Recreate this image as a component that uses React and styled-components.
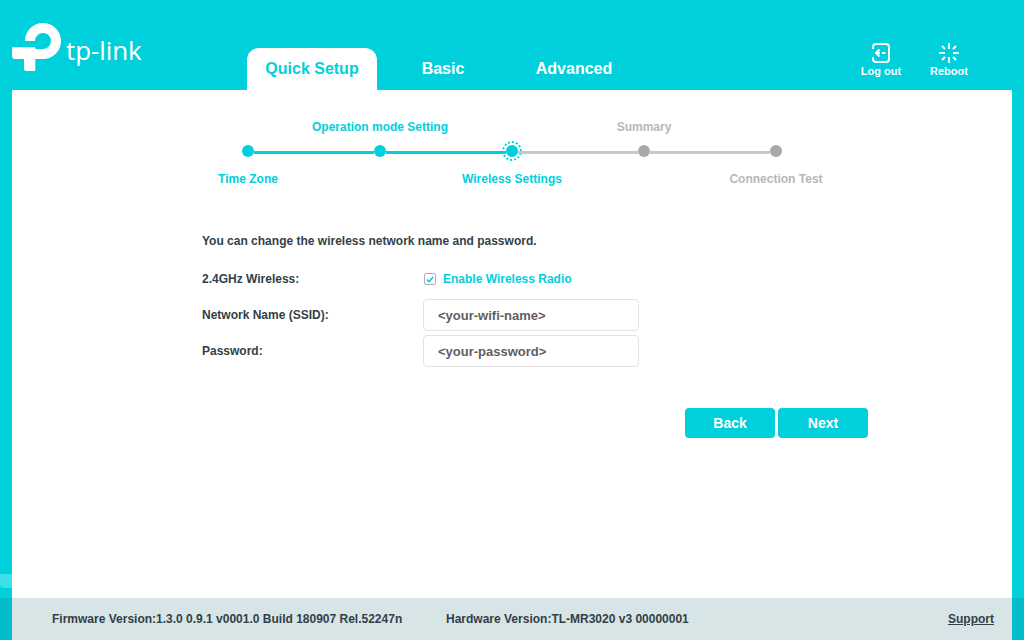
import React from "react";
import styled, { createGlobalStyle } from "styled-components";

const TEAL = "#00d0dc";

const GlobalStyle = createGlobalStyle`
   html, body {
      margin: 0;
      padding: 0;
      height: 100%;
      overflow: hidden;
   }
   body {
      font-family: "Liberation Sans", Arial, sans-serif;
      background: ${TEAL};
   }
   #root {
      height: 100%;
   }
`;

// page frame
const Page = styled.div`
   position: relative;
   display: flex;
   flex-direction: column;
   width: 1024px;
   height: 640px;
   background: ${TEAL};
`;

const Header = styled.header`
   display: flex;
   align-items: flex-end;
   height: 90px;
   padding-left: 12px;
   flex: none;
`;

const Logo = styled.div`
   display: flex;
   align-items: flex-start;
   align-self: flex-start;
   width: 235px;
   height: 48px;
   margin-top: 23px;
   color: #fff;
`;

const LogoText = styled.span`
   margin: 11px 0 0 4px;
   font-family: "Open Sans", sans-serif;
   font-size: 26px;
   font-weight: 400;
   line-height: 32px;
   letter-spacing: -0.1px;
`;

const Tabs = styled.nav`
   display: flex;
   gap: 1px;
`;

const Tab = styled.a`
   width: 130px;
   height: 42px;
   font-size: 16px;
   font-weight: 700;
   line-height: 41px;
   text-align: center;
   color: ${({ $active }) => ($active ? TEAL : "#fff")};
   background: ${({ $active }) => ($active ? "#fff" : "transparent")};
   border-radius: 12px 12px 0 0;
`;

const Tools = styled.div`
   display: flex;
   gap: 28px;
   margin-left: auto;
   margin-right: 55px;
   align-self: flex-start;
   margin-top: 43px;
`;

const Tool = styled.a`
   display: flex;
   flex-direction: column;
   align-items: center;
   width: 40px;
   gap: 2px;
   font-size: 11px;
   font-weight: 700;
   line-height: 13px;
   color: #fff;
   white-space: nowrap;
`;

const Main = styled.main`
   display: flex;
   flex-direction: column;
   flex: 1;
   margin: 0 12px;
   background: #fff;
`;

// stepper
const Stepper = styled.ol`
   display: grid;
   grid-template-columns: repeat(5, 132px);
   justify-content: start;
   margin: 0 0 0 170px;
   padding: 27px 0 0;
   list-style: none;
`;

const Step = styled.li`
   display: grid;
   grid-template-columns: 100%;
   grid-template-rows: 20px 28px 28px;
   justify-items: center;
   align-items: center;
   font-size: 12px;
   font-weight: 700;
   white-space: nowrap;
   color: ${({ $done }) => ($done ? TEAL : "#b8b8b8")};
`;

const StepLabel = styled.span`
   grid-row: ${({ $above }) => ($above ? 1 : 3)};
   line-height: 20px;
`;

const Node = styled.span`
   grid-row: 2;
   position: relative;
   width: 12px;
   height: 12px;
   border-radius: 50%;
   background: ${({ $done }) => ($done ? TEAL : "#a9a9ad")};

   &::after {
      content: ${({ $last }) => ($last ? "none" : '""')};
      position: absolute;
      left: 12px;
      top: 6px;
      width: 120px;
      height: 3px;
      background: ${({ $lineDone }) => ($lineDone ? TEAL : "#c8c8c8")};
   }

   &::before {
      content: ${({ $current }) => ($current ? '""' : "none")};
      position: absolute;
      inset: -4px;
      border: 2px dotted ${TEAL};
      border-radius: 50%;
   }
`;

// form
const Form = styled.form`
   display: flex;
   flex-direction: column;
   width: 666px;
   margin: 40px 0 0 190px;
`;

const Intro = styled.p`
   margin: 0 0 13px;
   font-size: 12px;
   font-weight: 700;
   line-height: 16px;
   color: #333f48;
`;

const Row = styled.div`
   display: grid;
   grid-template-columns: 221px 216px;
   align-items: center;
   height: 36px;
`;

const CheckRow = styled(Row)`
   height: 34px;
   margin-bottom: 1px;
`;

const Label = styled.label`
   font-size: 12px;
   font-weight: 700;
   color: #333f48;
`;

const CheckLabel = styled.label`
   display: flex;
   align-items: center;
   gap: 7px;
   margin-left: 1px;
   font-size: 12px;
   font-weight: 700;
   color: ${TEAL};
`;

const CheckBox = styled.span`
   display: flex;
   align-items: center;
   justify-content: center;
   box-sizing: border-box;
   width: 12px;
   height: 12px;
   border: 1px solid #aeaeae;
   border-radius: 2px;
   background: #fff;
`;

const Input = styled.input`
   box-sizing: border-box;
   width: 216px;
   height: 32px;
   padding: 0 14px;
   border: 1px solid #e3e3e3;
   border-radius: 4px;
   font: 700 13px "Liberation Sans", Arial, sans-serif;
   color: #5f5f5f;
   background: #fff;
   outline: none;
`;

const Actions = styled.div`
   display: flex;
   justify-content: flex-end;
   gap: 3px;
   margin-top: 39px;
`;

const Button = styled.button`
   width: 90px;
   height: 30px;
   padding: 0;
   border: 0;
   border-radius: 4px;
   font: 700 14px "Liberation Sans", Arial, sans-serif;
   color: #fff;
   background: ${TEAL};
`;

// footer
const Footer = styled.footer`
   display: flex;
   align-items: center;
   flex: none;
   height: 42px;
   margin-top: auto;
   padding: 0 18px 0 40px;
   font-size: 12px;
   font-weight: 700;
   color: #333f48;
   background: #d7e5e6;
`;

const Firmware = styled.span`
   width: 394px;
`;

const Support = styled.a`
   margin-left: auto;
   color: #333f48;
   text-decoration: underline;
`;

// the darker edges next to the footer
const Edge = styled.div`
   position: absolute;
   bottom: 0;
   width: 12px;
   height: 42px;
   background: #00bccb;
   ${({ $side }) => $side}: 0;
`;

const Glow = styled.div`
   position: absolute;
   left: 0;
   bottom: 52px;
   width: 12px;
   height: 14px;
   background: #3fdfe8;
   border-radius: 0 0 0 4px;
`;

const TpLogo = () => (
   <svg width="50" height="48" viewBox="12 23 50 48" fill="#fff" aria-hidden="true">
      <path d="M25 41A18 18 0 1 1 43 59H35.3V71H26.5Q24 71 24 68.5V59H15Q12 59 12 56V47.3H35.3V49H43A8 8 0 1 0 35 41Z" />
   </svg>
);

const LogoutIcon = () => (
   <svg width="18" height="20" viewBox="0 0 18 20" fill="none" stroke="#fff" strokeWidth="2" aria-hidden="true">
      <path d="M1 6V4Q1 1 4 1H14Q17 1 17 4V16Q17 19 14 19H4Q1 19 1 16V14" />
      <path d="M7.5 6.5L4 10L7.5 13.5M4 10H8M10 10H13.5" />
   </svg>
);

const RebootIcon = () => (
   <svg width="20" height="20" viewBox="0 0 20 20" fill="none" stroke="#fff" strokeWidth="2" aria-hidden="true">
      <path d="M10 0V6M10 14V20M0 10H6M14 10H20M3 3L6 6M14 14L17 17M17 3L14 6M6 14L3 17" />
   </svg>
);

const steps = [
   { label: "Time Zone", done: true, lineDone: true },
   { label: "Operation mode Setting", above: true, done: true, lineDone: true },
   { label: "Wireless Settings", done: true, current: true },
   { label: "Summary", above: true },
   { label: "Connection Test", last: true },
];

export default function App() {
   return (
      <Page>
         <GlobalStyle />
         <Header>
            <Logo>
               <TpLogo />
               <LogoText>tp-link</LogoText>
            </Logo>
            <Tabs>
               <Tab $active>Quick Setup</Tab>
               <Tab>Basic</Tab>
               <Tab>Advanced</Tab>
            </Tabs>
            <Tools>
               <Tool>
                  <LogoutIcon />
                  Log out
               </Tool>
               <Tool>
                  <RebootIcon />
                  Reboot
               </Tool>
            </Tools>
         </Header>
         <Main>
            <Stepper>
               {steps.map((step) => (
                  <Step key={step.label} $done={step.done}>
                     <StepLabel $above={step.above}>{step.label}</StepLabel>
                     <Node
                        $done={step.done}
                        $current={step.current}
                        $last={step.last}
                        $lineDone={step.lineDone}
                     />
                  </Step>
               ))}
            </Stepper>
            <Form>
               <Intro>You can change the wireless network name and password.</Intro>
               <CheckRow>
                  <Label>2.4GHz Wireless:</Label>
                  <CheckLabel>
                     <CheckBox>
                        <svg width="8" height="7" viewBox="0 0 8 7" fill="none" stroke={TEAL} strokeWidth="1.6">
                           <path d="M0.8 3.5L3 5.6L7.2 1" />
                        </svg>
                     </CheckBox>
                     Enable Wireless Radio
                  </CheckLabel>
               </CheckRow>
               <Row>
                  <Label>Network Name (SSID):</Label>
                  <Input defaultValue="<your-wifi-name>" />
               </Row>
               <Row>
                  <Label>Password:</Label>
                  <Input defaultValue="<your-password>" />
               </Row>
               <Actions>
                  <Button type="button">Back</Button>
                  <Button type="button">Next</Button>
               </Actions>
            </Form>
            <Footer>
               <Firmware>Firmware Version:1.3.0 0.9.1 v0001.0 Build 180907 Rel.52247n</Firmware>
               <span>Hardware Version:TL-MR3020 v3 00000001</span>
               <Support>Support</Support>
            </Footer>
         </Main>
         <Edge $side="left" />
         <Edge $side="right" />
         <Glow />
      </Page>
   );
}
